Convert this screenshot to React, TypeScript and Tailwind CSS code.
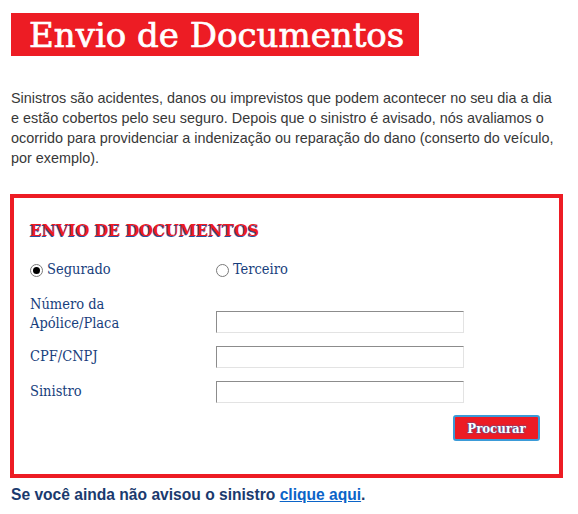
import React from "react";

const serif = { fontFamily: '"DejaVu Serif", "Liberation Serif", serif' };
const cond = { fontFamily: '"DejaVu Serif Condensed", "DejaVu Serif", "Liberation Serif", serif', fontStretch: "condensed" as const };

function Radio({ checked }: { checked?: boolean }) {
  return (
    <span className="w-[13px] h-[13px] rounded-full border border-[#7a7a7a] bg-white flex items-center justify-center mr-[4px] shrink-0">
      {checked && <span className="w-[7px] h-[7px] rounded-full bg-black" />}
    </span>
  );
}

const inputCls =
  "w-[248px] h-[22px] border border-t-[#8c8c8c] border-l-[#8c8c8c] border-b-[#e3e3e3] border-r-[#e3e3e3] outline-none bg-white";

export default function App() {
  return (
    <div className="w-[578px] h-[514px] bg-white overflow-hidden" style={{ fontFamily: '"Liberation Sans", Arial, sans-serif' }}>
      <div className="pt-[13px] pl-[11px]">
        <div className="w-[408px] h-[43px] bg-[#ed1c24] flex items-center pl-[18px]">
          <span
            className="text-white text-[34px] leading-none"
            style={{ ...serif, WebkitTextStroke: "0.7px white" }}
          >
            Envio de Documentos
          </span>
        </div>
      </div>
      <p className="ml-[11px] mt-[32px] w-[550px] text-[14.4px] leading-[20px] text-[#383838]">
        Sinistros são acidentes, danos ou imprevistos que podem acontecer no seu dia a dia e estão cobertos pelo seu seguro. Depois que o sinistro é avisado, nós avaliamos o ocorrido para providenciar a indenização ou reparação do dano (conserto do veículo, por exemplo).
      </p>
      <div className="ml-[10px] mt-[26px] w-[553px] h-[284px] border-4 border-[#ed1c24] pl-[16px] pt-[20px]">
        <h2
          className="text-[#ed1c24] font-bold text-[17.4px] leading-[24px]"
          style={{ ...cond, textShadow: "-1px 1px 0 #2b4f9c" }}
        >
          ENVIO DE DOCUMENTOS
        </h2>
        <div className="flex items-center mt-[18px] h-[20px] text-[#173e7c] text-[14.5px]" style={cond}>
          <label className="flex items-center w-[186px]">
            <Radio checked />
            Segurado
          </label>
          <label className="flex items-center">
            <Radio />
            Terceiro
          </label>
        </div>
        <div className="mt-[15px] text-[#173e7c] text-[14.5px]" style={cond}>
          <div className="flex items-end">
            <div className="w-[186px] leading-[19px]">
              Número da<br />Apólice/Placa
            </div>
            <input className={inputCls} />
          </div>
          <div className="flex items-center mt-[13px]">
            <div className="w-[186px]">CPF/CNPJ</div>
            <input className={inputCls} />
          </div>
          <div className="flex items-center mt-[13px]">
            <div className="w-[186px]">Sinistro</div>
            <input className={inputCls} />
          </div>
          <div className="flex justify-end w-[510px] mt-[12px]">
            <button
              className="w-[87px] h-[26px] bg-[#ed1c24] border-2 border-[#3b9bd8] rounded-[3px] text-white font-bold text-[13px] leading-none"
              style={{ ...cond, textShadow: "0 0 2px #1d6fc0, 0 0 1px #1d6fc0" }}
            >
              Procurar
            </button>
          </div>
        </div>
      </div>
      <p className="ml-[11px] mt-[7px] text-[15.6px] font-bold text-[#1a3a6e] leading-[20px]">
        Se você ainda não avisou o sinistro{" "}
        <a href="#" className="text-[#0b64c8] underline">clique aqui</a>.
      </p>
    </div>
  );
}
